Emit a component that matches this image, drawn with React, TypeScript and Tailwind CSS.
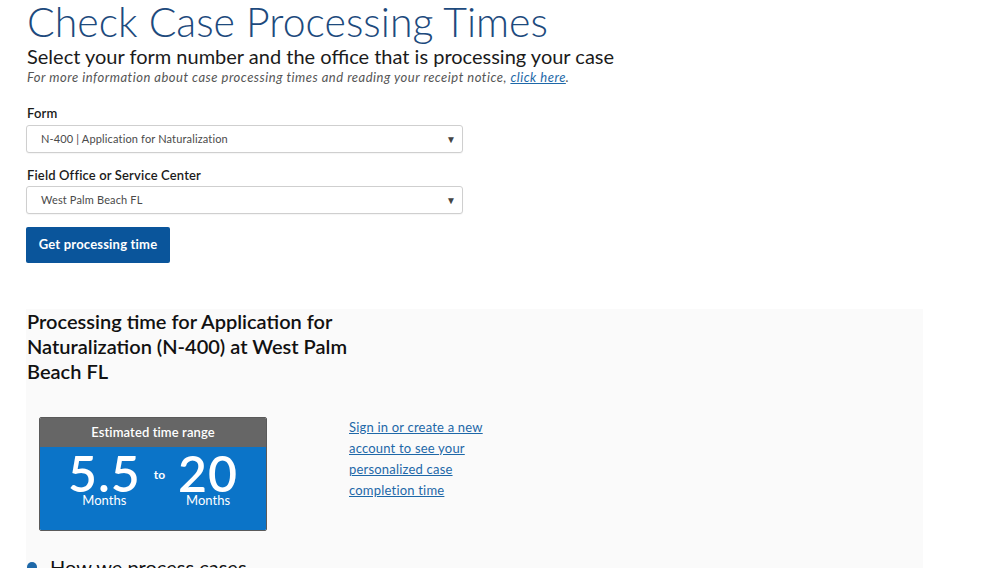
import React from "react";

type SelectProps = { value: string };

function FakeSelect({ value }: SelectProps) {
    return (
        <div className="relative flex h-[28px] w-[437px] items-center rounded-[3px] border border-[#cfcfcf] bg-white pl-[14px] shadow-[0_1px_1px_rgba(0,0,0,0.04)]">
            <span className="text-[11px] tracking-[0.15px] text-[#4a4a4a]">{value}</span>
            <span className="absolute right-[6px] top-[7px] text-[10px] leading-[12px] text-[#444]">▼</span>
        </div>
    );
}

export default function App() {
    return (
        <div className="h-[568px] overflow-hidden bg-white px-[26px] font-['Lato',sans-serif] text-[#1b1b1b]">
            <h1 className="pl-[1px] text-[41px] font-light leading-[44px] text-[#1d4a7d]">Check Case Processing Times</h1>
            <p className="pl-[1px] text-[20px] leading-[24px] text-[#1b1b1b]">
                Select your form number and the office that is processing your case
            </p>
            <p className="pl-[1px] text-[13px] italic leading-[18px] tracking-[0.5px] text-[#555]">
                For more information about case processing times and reading your receipt notice,{" "}
                <a className="text-[#1e68a8] underline">click here</a>.
            </p>

            <div className="mt-[18px]">
                <label className="block pl-[1px] text-[13px] font-semibold leading-[18px] tracking-[0.15px] text-[#1b1b1b]">Form</label>
                <div className="mt-[3px]">
                    <FakeSelect value="N-400 | Application for Naturalization" />
                </div>
            </div>
            <div className="mt-[13px]">
                <label className="block pl-[1px] text-[13px] font-semibold leading-[18px] tracking-[0.15px] text-[#1b1b1b]">Field Office or Service Center</label>
                <div className="mt-[2px]">
                    <FakeSelect value="West Palm Beach FL" />
                </div>
            </div>
            <button className="mt-[13px] flex h-[36px] w-[144px] items-center justify-center rounded-[2px] bg-[#0a559b] text-[13px] font-bold tracking-[0.2px] text-white">
                Get processing time
            </button>

            <div className="mt-[46px] w-[897px] bg-[#fafafa] pb-[40px]">
                <h2 className="max-w-[360px] pl-[1px] text-[20px] font-semibold leading-[25px] text-[#111]">
                    Processing time for Application for Naturalization (N-400) at West Palm Beach FL
                </h2>

                <div className="mt-[33px] flex pl-[13px]">
                    <div className="w-[228px] overflow-hidden rounded-[2px] border border-[#5a5a5a]">
                        <div className="flex h-[29px] items-center justify-center bg-[#666] text-[13px] font-semibold tracking-[0.1px] text-white">
                            Estimated time range
                        </div>
                        <div className="flex h-[83px] items-start justify-center gap-[13px] bg-[#0b74c8] pt-[4px] text-white">
                            <div className="flex flex-col items-center">
                                <span className="text-[50px] font-semibold leading-[44px] tracking-[1px]">5.5</span>
                                <span className="-mt-[1px] text-[13px] leading-[12px]">Months</span>
                            </div>
                            <span className="mt-[15px] text-[12px] font-bold">to</span>
                            <div className="flex flex-col items-center">
                                <span className="text-[50px] font-semibold leading-[44px] tracking-[1px]">20</span>
                                <span className="-mt-[1px] text-[13px] leading-[12px]">Months</span>
                            </div>
                        </div>
                    </div>
                    <div className="ml-[82px] w-[145px] text-[13px] leading-[21px] tracking-[0.2px]">
                        <a className="text-[#1e68a8] underline">
                            Sign in or create a new account to see your personalized case completion time
                        </a>
                    </div>
                </div>

                <div className="mt-[23px] flex items-center gap-[13px]">
                    <span className="ml-[1px] inline-block h-[10px] w-[10px] rounded-full bg-[#1e68a8]"></span>
                    <span className="text-[20px] leading-[26px] text-[#111]">How we process cases</span>
                </div>
            </div>
        </div>
    );
}
